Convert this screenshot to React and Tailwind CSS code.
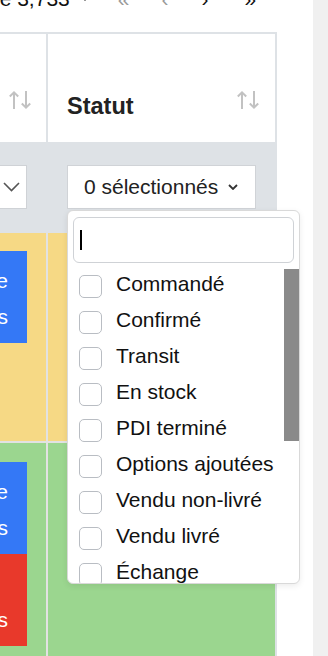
import React from "react";

const SortIcon = () => (
  <svg width="24" height="20" viewBox="0 0 24 20" fill="none" stroke="#c2c2c2" strokeWidth="2">
    <path d="M6 19V2.5M1.8 6.5L6 2.3l4.2 4.2" />
    <path d="M18 1v16.5M13.8 13.5L18 17.7l4.2-4.2" />
  </svg>
);

const items = [
  "Commandé",
  "Confirmé",
  "Transit",
  "En stock",
  "PDI terminé",
  "Options ajoutées",
  "Vendu non-livré",
  "Vendu livré",
  "Échange",
  "Annulé",
];

export default function App() {
  return (
    <div
      className="w-[328px] h-[656px] overflow-hidden flex bg-white text-[#111]"
      style={{ fontFamily: '"Liberation Sans", Arial, sans-serif' }}
    >
      <div className="w-[313px] shrink-0 flex flex-col">
        {/* pager (cut off at top) */}
        <div className="h-[32px] shrink-0 overflow-hidden">
          <div className="flex items-baseline h-[24px] -mt-[13px] text-[21px] leading-[24px] whitespace-nowrap">
            <span className="-ml-[12px]">de 3,733</span>
            <span className="ml-[14px] w-[2px] h-[3px] bg-[#999] self-start mt-[11px]"></span>
            <span className="ml-[32px] text-[#999]">«</span>
            <span className="ml-[32px] text-[#999]">‹</span>
            <span className="ml-[33px] text-[#111]">›</span>
            <span className="ml-[36px] text-[#111]">»</span>
          </div>
        </div>

        {/* table */}
        <div className="w-[277px] flex-1 flex flex-col border-t-2 border-r-2 border-[#dee2e6]">
          {/* header */}
          <div className="h-[108px] shrink-0 flex bg-white">
            <div className="w-[48px] shrink-0 border-r-2 border-[#dee2e6] flex justify-end items-end pr-[14px] pb-[32px]">
              <SortIcon />
            </div>
            <div className="flex-1 flex justify-between items-end pl-[19px] pr-[15px] pb-[22px]">
              <span className="text-[23.5px] leading-[28px] font-bold text-[#222]">Statut</span>
              <span className="mb-[10px] flex">
                <SortIcon />
              </span>
            </div>
          </div>

          {/* filter row */}
          <div className="h-[91px] shrink-0 flex bg-[#dee2e6]">
            <div className="w-[48px] shrink-0 overflow-hidden flex justify-end pr-[21px] pt-[23px]">
              <div className="w-[140px] shrink-0 h-[44px] bg-white border border-[#cfd2d6] flex items-center justify-end pr-[6px]">
                <svg width="17" height="10" viewBox="0 0 17 10" fill="none" stroke="#555" strokeWidth="1.6">
                  <path d="M1 1l7.5 7.5L16 1" />
                </svg>
              </div>
            </div>
            <div className="flex-1 pl-[19px] pr-[19px] pt-[23px]">
              <div className="relative">
                <div className="h-[44px] bg-white border border-[#d0d3d7] flex items-center pl-[16px] pr-[17px] text-[21px] text-[#222]">
                  <span className="flex-1 whitespace-nowrap">0 sélectionnés</span>
                  <svg width="10" height="6" viewBox="0 0 10 6" fill="none" stroke="#333" strokeWidth="1.8">
                    <path d="M1 1l4 4 4-4" />
                  </svg>
                </div>

                {/* dropdown */}
                <div className="absolute left-0 top-[45px] z-10 w-[233px] h-[374px] bg-white border border-[#d9d9d9] rounded-[6px] shadow-[0_2px_6px_rgba(0,0,0,0.08)] flex flex-col overflow-hidden pt-[6px]">
                  <div className="mx-[5px] h-[46px] shrink-0 border border-[#cfd2d6] rounded-[6px] flex items-center pl-[6px]">
                    <span className="w-[2px] h-[20px] bg-black"></span>
                  </div>
                  <div className="mt-[5px] flex-1 flex overflow-hidden">
                    <div className="flex-1 flex flex-col">
                      {items.map((t) => (
                        <div key={t} className="h-[36px] shrink-0 flex items-center pl-[11px]">
                          <span className="w-[23px] h-[23px] shrink-0 rounded-[5px] border border-[#b9bdc3] bg-white"></span>
                          <span className="ml-[14px] text-[21px] leading-[24px] pb-[4px] whitespace-nowrap text-[#111]">{t}</span>
                        </div>
                      ))}
                    </div>
                    <div className="w-[15px] shrink-0 pt-[1px]">
                      <div className="h-[172px] bg-[#8a8a8a]"></div>
                    </div>
                  </div>
                </div>
              </div>
            </div>
          </div>

          {/* row 1 */}
          <div className="h-[210px] shrink-0 flex bg-[#f6d985] border-b-2 border-[#e2e2e2]">
            <div className="w-[48px] shrink-0 overflow-hidden border-r-2 border-[#e2e2e2] flex justify-end items-start pr-[19px] pt-[18px]">
              <div className="w-[300px] shrink-0 h-[92px] bg-[#3478f6] text-white text-[21px] leading-[36px] text-right pr-[19px] pt-[12px] whitespace-nowrap">
                <span className="block">Voir la fiche</span>
                <span className="block">Modifier les infos</span>
              </div>
            </div>
            <div className="flex-1"></div>
          </div>

          {/* row 2 */}
          <div className="flex-1 flex bg-[#9bd68f]">
            <div className="w-[48px] shrink-0 overflow-hidden border-r-2 border-[#e2e2e2] flex flex-col items-end pr-[19px] pt-[19px]">
              <div className="w-[300px] shrink-0 h-[92px] bg-[#3478f6] text-white text-[21px] leading-[36px] text-right pr-[19px] pt-[12px] whitespace-nowrap">
                <span className="block">Voir la fiche</span>
                <span className="block">Modifier les infos</span>
              </div>
              <div className="w-[300px] shrink-0 h-[92px] bg-[#e8392b] text-white text-[21px] leading-[36px] text-right pr-[19px] pt-[12px] whitespace-nowrap">
                <span className="block pr-[40px]">Annuler</span>
                <span className="block">Retirer les options</span>
              </div>
            </div>
            <div className="flex-1"></div>
          </div>
        </div>
      </div>
      <div className="flex-1 bg-[#f0f0f0]"></div>
    </div>
  );
}
